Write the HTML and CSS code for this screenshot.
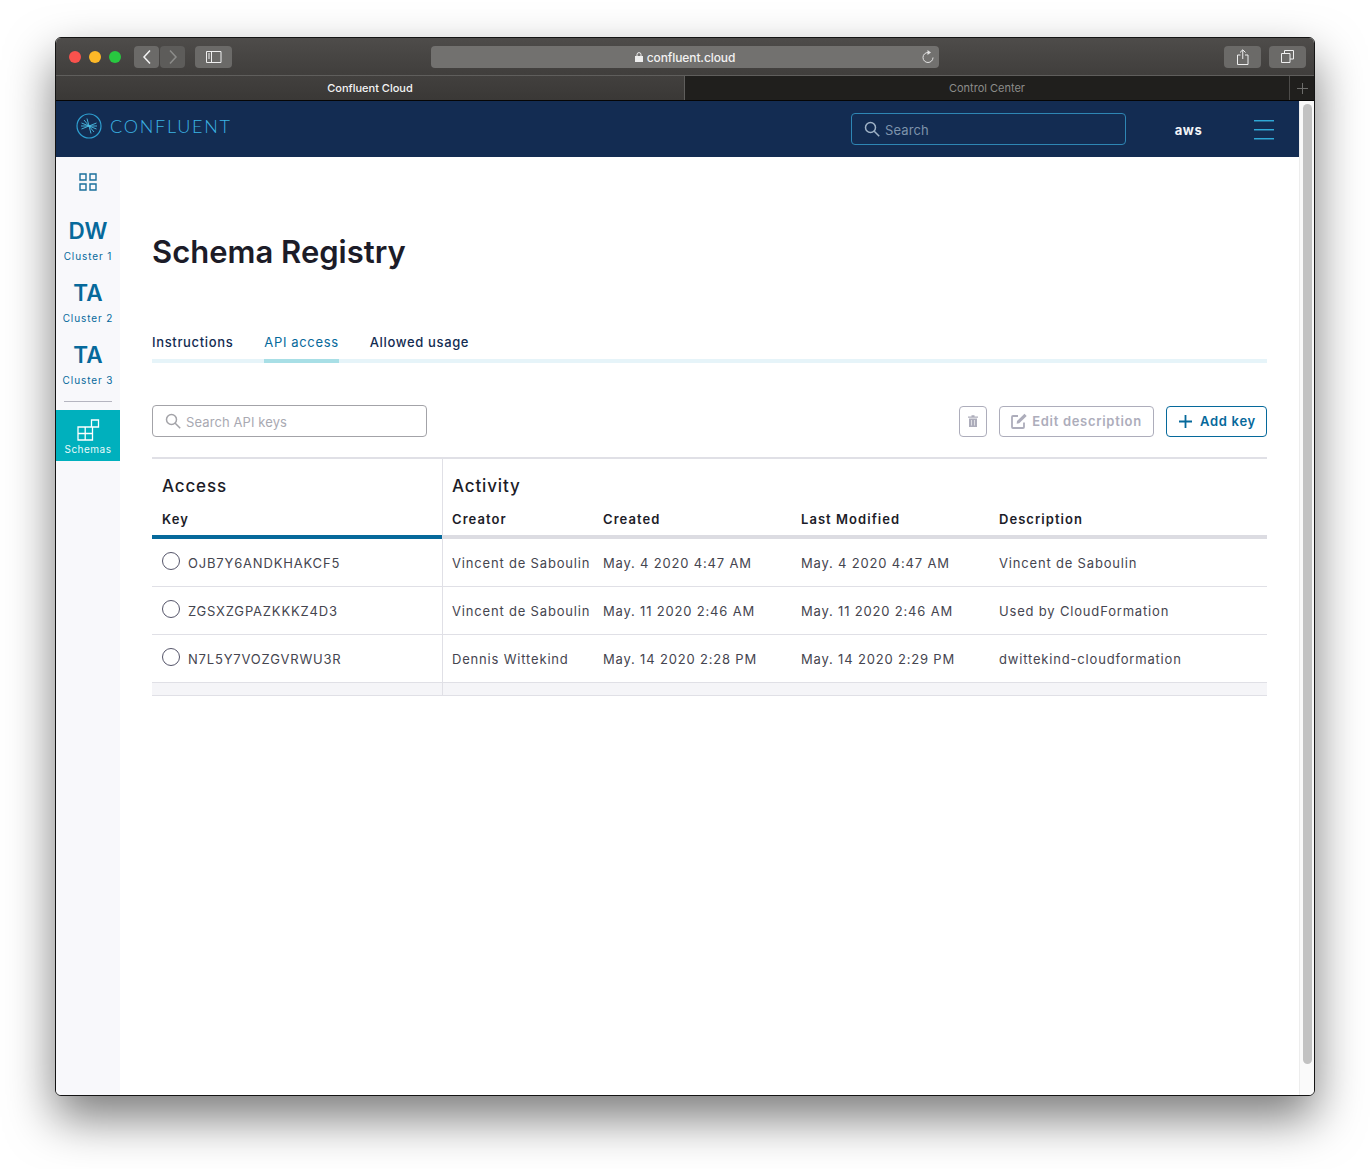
FILE: index.html
```html
<!DOCTYPE html>
<html lang="en">
<head>
    <meta charset="UTF-8">
    <title>Schema Registry</title>
    <link rel="stylesheet" href="styles.css">
</head>
<body>
    <div class="window">
        <div class="toolbar">
            <div class="lights">
                <span class="light red"></span>
                <span class="light yellow"></span>
                <span class="light green"></span>
            </div>
            <div class="nav-buttons">
                <div class="tool-btn nav-btn">
                    <svg width="10" height="16" viewBox="0 0 10 16"><path d="M8 1.5 2 8l6 6.5" fill="none" stroke="#f2f2f2" stroke-width="1.5"/></svg>
                </div>
                <div class="tool-btn nav-btn">
                    <svg width="10" height="16" viewBox="0 0 10 16"><path d="M2 1.5 8 8l-6 6.5" fill="none" stroke="#8c8c8a" stroke-width="1.5"/></svg>
                </div>
            </div>
            <div class="tool-btn wide-btn">
                <svg width="16" height="12" viewBox="0 0 16 12"><path d="M.5.5h14.500v11H.5zM5.500.5v11" fill="none" stroke="#efefef"/><path d="M2 3h2M2 5h2M2 7h2" stroke="#efefef"/></svg>
            </div>
            <div class="address">
                <svg class="lock" width="8" height="10" viewBox="0 0 8 10"><path d="M0 4h8v6H0z" fill="#eee"/><path d="M2 4V2.600a2 2 0 0 1 4 0V4" fill="none" stroke="#eee"/></svg>
                <span>confluent.cloud</span>
                <svg class="reload" width="12" height="13" viewBox="0 0 12 13"><path d="M6 2.500a5 5 0 1 0 5 5" fill="none" stroke="#e2e2e2"/><path d="M5.500 0 9 2.500 5.500 5z" fill="#e2e2e2"/></svg>
            </div>
            <div class="tool-btn wide-btn">
                <svg width="12" height="16" viewBox="0 0 12 16"><path d="M3.500 6H.5v9.500h10.500V6h-3M5.750 10V1M3 3.500 5.750.8l2.750 2.700" fill="none" stroke="#efefef"/></svg>
            </div>
            <div class="tool-btn wide-btn last-btn">
                <svg width="13" height="13" viewBox="0 0 13 13"><path d="M.5 3.500h8.500V12.500H.5zM3.500 3.500V.5h9v8.500H9" fill="none" stroke="#efefef"/></svg>
            </div>
        </div>
        <div class="tabs">
            <div class="tab tab-active">Confluent Cloud</div>
            <div class="tab">Control Center</div>
            <div class="tab-add">
                <svg width="11" height="11" viewBox="0 0 11 11"><path d="M5.500 0v11M0 5.500h11" stroke="#6d6d6b"/></svg>
            </div>
        </div>
        <div class="browser-body">
            <div class="page">
                <header class="topbar">
                    <div class="logo">
                        <svg width="26" height="26" viewBox="0 0 26 26">
                            <circle cx="13" cy="13" r="12" fill="none" stroke="#2e9fd0" stroke-width="1.200"/>
                            <path d="M13 13 5.500 10M13 13 5 13M13 13l-7.500 3M13 13 8 7M13 13 20.500 10M13 13h8M13 13l7.500 3M13 13l5 6M13 13l2 7.500M13 13l-2-7.500" stroke="#4cbfe6" stroke-width=".9"/>
                        </svg>
                        <span>CONFLUENT</span>
                    </div>
                    <div class="top-search">
                        <svg width="16" height="16" viewBox="0 0 16 16"><circle cx="6.500" cy="6.500" r="5" fill="none" stroke="#9fb2c6" stroke-width="1.500"/><path d="m10.200 10.200 5 5" stroke="#9fb2c6" stroke-width="1.500"/></svg>
                        <span>Search</span>
                    </div>
                    <div class="account">aws</div>
                    <div class="burger"><span></span><span></span><span></span></div>
                </header>
                <div class="content-row">
                    <nav class="sidebar">
                        <svg class="grid-icon" width="18" height="18" viewBox="0 0 18 18">
                            <path d="M1 1h6v6H1zM11 1h6v6h-6zM1 11h6v6H1zM11 11h6v6h-6z" fill="none" stroke="#1a6f9c" stroke-width="1.400"/>
                        </svg>
                        <a class="cluster first-cluster"><b>DW</b><small>Cluster 1</small></a>
                        <a class="cluster"><b>TA</b><small>Cluster 2</small></a>
                        <a class="cluster"><b>TA</b><small>Cluster 3</small></a>
                        <div class="side-rule"></div>
                        <a class="side-active">
                            <svg width="23" height="22" viewBox="0 0 23 22">
                                <path d="M1 8h14.500v13H1zM8.200 8v13M1 14.500h14.500M14.500 1h7v7h-7z" fill="none" stroke="#fff" stroke-width="1.300"/>
                            </svg>
                            <small>Schemas</small>
                        </a>
                    </nav>
                    <main class="main">
                        <h1>Schema Registry</h1>
                        <div class="page-tabs">
                            <a>Instructions</a>
                            <a class="selected">API access</a>
                            <a>Allowed usage</a>
                        </div>
                        <div class="actions">
                            <div class="key-search">
                                <svg width="16" height="16" viewBox="0 0 16 16"><circle cx="6.500" cy="6.500" r="5" fill="none" stroke="#a3a3a8" stroke-width="1.500"/><path d="m10.200 10.200 5 5" stroke="#a3a3a8" stroke-width="1.500"/></svg>
                                <span>Search API keys</span>
                            </div>
                            <div class="action-btns">
                                <button class="btn btn-icon" disabled>
                                    <svg width="10" height="12" viewBox="0 0 10 12"><path d="M0 1.500h10v1.200H0zM3.500.3h3v1.200h-3zM1 3.500h8V12H1z" fill="#adadbb"/><path d="M3.500 5v5.500M6.500 5v5.500" stroke="#fff" stroke-width=".6"/></svg>
                                </button>
                                <button class="btn btn-edit" disabled>
                                    <svg width="17" height="16" viewBox="0 0 17 16"><path d="M13 9.500V14a1 1 0 0 1-1 1H2a1 1 0 0 1-1-1V4a1 1 0 0 1 1-1h5" fill="none" stroke="#adadbb" stroke-width="1.800"/><path d="M6 8 13.500 .8l2.200 2.200L8.200 10.300 5.700 10.700z" fill="#adadbb"/></svg>
                                    Edit description
                                </button>
                                <button class="btn btn-add">
                                    <svg width="13" height="13" viewBox="0 0 13 13"><path d="M6.500 0v13M0 6.500h13" stroke="#06699b" stroke-width="1.800"/></svg>
                                    Add key
                                </button>
                            </div>
                        </div>
                        <div class="keys-table">
                            <div class="col-access">
                                <h2>Access</h2>
                                <div class="col-head key-head">Key</div>
                                <div class="key-row"><span class="radio"></span>OJB7Y6ANDKHAKCF5</div>
                                <div class="key-row"><span class="radio"></span>ZGSXZGPAZKKKZ4D3</div>
                                <div class="key-row"><span class="radio"></span>N7L5Y7VOZGVRWU3R</div>
                                <div class="table-foot"></div>
                            </div>
                            <div class="col-activity">
                                <h2>Activity</h2>
                                <div class="activity-row activity-head">
                                    <span>Creator</span><span>Created</span><span>Last Modified</span><span>Description</span>
                                </div>
                                <div class="activity-row">
                                    <span>Vincent de Saboulin</span><span>May. 4 2020 4:47 AM</span><span>May. 4 2020 4:47 AM</span><span>Vincent de Saboulin</span>
                                </div>
                                <div class="activity-row">
                                    <span>Vincent de Saboulin</span><span>May. 11 2020 2:46 AM</span><span>May. 11 2020 2:46 AM</span><span>Used by CloudFormation</span>
                                </div>
                                <div class="activity-row">
                                    <span>Dennis Wittekind</span><span>May. 14 2020 2:28 PM</span><span>May. 14 2020 2:29 PM</span><span>dwittekind-cloudformation</span>
                                </div>
                                <div class="table-foot"></div>
                            </div>
                        </div>
                    </main>
                </div>
            </div>
            <div class="scrollbar"><div class="thumb"></div></div>
        </div>
    </div>
</body>
</html>
```

FILE: styles.css
```css
* {
    box-sizing: border-box;
}
html, body {
    height: 100%;
}
body {
    margin: 0;
    background-color: #fff;
    font-family: Inter, "Liberation Sans", sans-serif;
    color: #1f1f2b;
    overflow: hidden;
}
.window {
    width: 1260px;
    height: 1059px;
    margin: 37px 0 0 55px;
    border: 1px solid #141414;
    border-radius: 6px;
    overflow: hidden;
    box-shadow: 0 22px 48px rgba(0, 0, 0, 0.52);
    background-color: #fff;
    display: flex;
    flex-direction: column;
}
.toolbar {
    height: 38px;
    flex: none;
    display: flex;
    align-items: center;
    padding: 0 8px 0 13px;
    background: linear-gradient(#4e4c4a, #403e3c);
    border-bottom: 1px solid #5f5e5c;
}
.lights {
    display: flex;
    gap: 8px;
    margin-right: 13px;
}
.light {
    width: 12px;
    height: 12px;
    border-radius: 50%;
}
.red { background-color: #f9524d; }
.yellow { background-color: #fdb827; }
.green { background-color: #28c840; }
.nav-buttons {
    display: flex;
    gap: 1px;
    margin-right: 10px;
}
.tool-btn {
    flex: none;
    height: 22px;
    border-radius: 4px;
    background-color: #6b6a68;
    display: flex;
    align-items: center;
    justify-content: center;
}
.nav-btn {
    width: 25px;
}
.nav-btn + .nav-btn {
    background-color: #5d5c5a;
}
.wide-btn {
    width: 37px;
}
.address {
    flex: none;
    width: 508px;
    height: 22px;
    margin: 0 285px 0 199px;
    border-radius: 4px;
    background-color: #72716f;
    color: #f2f2f2;
    font-size: 12px;
    font-weight: 500;
    letter-spacing: -0.1px;
    display: flex;
    align-items: center;
    justify-content: center;
    gap: 4px;
    padding-top: 1px;
    position: relative;
}
.reload {
    position: absolute;
    right: 5px;
    top: 4px;
}
.last-btn {
    margin-left: 8px;
}
.tabs {
    height: 25px;
    flex: none;
    display: flex;
    border-bottom: 1px solid #050505;
    background-color: #201f1d;
    font-size: 11px;
    line-height: 24px;
    color: #8c8c8a;
    text-align: center;
}
.tab {
    width: 604px;
}
.tab-active {
    width: 629px;
    background: linear-gradient(#42403e, #3a3836);
    border-right: 1px solid #5f5e5c;
    color: #f4f4f4;
    font-weight: 500;
}
.tab-add {
    width: 25px;
    border-left: 1px solid #4d4c4a;
    display: flex;
    align-items: center;
    justify-content: center;
}
.browser-body {
    flex: 1;
    min-height: 0;
    display: flex;
}
.page {
    flex: 1;
    display: flex;
    flex-direction: column;
}
.topbar {
    height: 56px;
    flex: none;
    background-color: #132c52;
    display: flex;
    align-items: center;
    padding: 0 25px 0 20px;
}
.logo {
    display: flex;
    align-items: center;
    gap: 8px;
    color: #3cb4e4;
    font-family: Lato, "Liberation Sans", sans-serif;
    font-size: 18px;
    font-weight: 300;
    letter-spacing: 1.75px;
    margin-top: -7px;
}
.top-search {
    width: 275px;
    height: 32px;
    margin-left: auto;
    border: 1px solid #2e86b4;
    border-radius: 4px;
    display: flex;
    align-items: center;
    gap: 5px;
    padding-left: 12px;
    color: #7d93ab;
    font-size: 13px;
    letter-spacing: 0.1px;
}
.top-search span,
.key-search span {
    margin-top: 2px;
}
.account {
    width: 125px;
    margin-top: 2px;
    text-align: center;
    color: #f3f5f8;
    font-size: 13px;
    font-weight: 700;
    letter-spacing: 0.6px;
}
.burger {
    width: 20px;
    margin-left: 3px;
    display: flex;
    flex-direction: column;
    gap: 8px;
}
.burger span {
    height: 1px;
    background-color: #2ea8d6;
    box-shadow: 0 1px 0 #23668f;
}
.content-row {
    flex: 1;
    display: flex;
    min-height: 0;
}
.sidebar {
    width: 64px;
    flex: none;
    background-color: #f8f8fb;
    display: flex;
    flex-direction: column;
    align-items: center;
    padding-top: 16px;
}
.cluster {
    display: flex;
    flex-direction: column;
    align-items: center;
    margin-top: 16px;
    color: #06699b;
}
.first-cluster {
    margin-top: 26px;
}
.cluster b {
    font-size: 22.5px;
    line-height: 28px;
    font-weight: 600;
}
.cluster small,
.side-active small {
    font-size: 10px;
    line-height: 13px;
    letter-spacing: 0.9px;
    margin-top: 5px;
}
.side-rule {
    width: 48px;
    height: 1px;
    margin-top: 14px;
    background-color: #b5b5c0;
}
.side-active {
    width: 64px;
    height: 51px;
    margin-top: 8px;
    padding-top: 9px;
    background-color: #00b0bd;
    color: #e8fafb;
    display: flex;
    flex-direction: column;
    align-items: center;
}
.side-active small {
    margin-top: 2px;
    letter-spacing: 0.5px;
}
.main {
    flex: 1;
    padding: 0 32px;
}
h1 {
    margin: 76px 0 0;
    font-size: 31px;
    line-height: 38px;
    font-weight: 600;
    color: #1c1c28;
}
.page-tabs {
    display: flex;
    gap: 31px;
    margin-top: 62px;
    height: 30px;
    border-bottom: 4px solid #e6f4f9;
    font-size: 13px;
    font-weight: 500;
    line-height: 18px;
    letter-spacing: 0.65px;
    color: #132c52;
}
.page-tabs a {
    height: 30px;
}
.page-tabs .selected {
    font-weight: 400;
    color: #06699b;
    border-bottom: 4px solid #a8dfe6;
}
.actions {
    display: flex;
    align-items: center;
    justify-content: space-between;
    margin-top: 42px;
}
.key-search {
    width: 275px;
    height: 32px;
    border: 1px solid #a3a3a8;
    border-radius: 4px;
    display: flex;
    align-items: center;
    gap: 5px;
    padding-left: 12px;
    color: #a9a9b2;
    font-size: 13px;
    letter-spacing: 0.1px;
}
.action-btns {
    display: flex;
    gap: 12px;
}
.btn {
    height: 31px;
    border-radius: 4px;
    background-color: #fff;
    font-family: Inter, "Liberation Sans", sans-serif;
    font-size: 13px;
    font-weight: 600;
    letter-spacing: 0.7px;
    display: flex;
    align-items: center;
    justify-content: center;
    gap: 4px;
    padding: 0;
}
.btn[disabled] {
    border: 1px solid #adadbb;
    color: #adadbb;
}
.btn-icon {
    width: 28px;
}
.btn-edit {
    width: 155px;
}
.btn-add {
    width: 101px;
    padding-left: 2px;
    border: 1px solid #06699b;
    color: #06699b;
    gap: 8px;
}
.keys-table {
    display: flex;
    margin-top: 20px;
    border-top: 2px solid #e0e0e6;
    font-size: 13px;
    letter-spacing: 0.82px;
    color: #45454f;
}
.col-access {
    width: 291px;
    border-right: 1px solid #e0e0e6;
}
.col-activity {
    flex: 1;
}
h2 {
    margin: 0;
    height: 46px;
    padding: 15px 0 0 10px;
    font-size: 17px;
    line-height: 24px;
    font-weight: 500;
    letter-spacing: 0.85px;
    color: #1c1c28;
}
.col-activity h2 {
    padding-left: 9px;
}
.col-head,
.activity-head {
    font-weight: 600;
    letter-spacing: 1.05px;
    color: #1c1c28;
    line-height: 28px;
}
.key-head {
    height: 34px;
    padding-left: 10px;
    border-bottom: 4px solid #06699b;
}
.key-row {
    height: 48px;
    padding-left: 10px;
    display: flex;
    align-items: center;
    gap: 8px;
    border-bottom: 1px solid #e0e0e6;
}
.radio {
    width: 18px;
    height: 18px;
    margin-top: -4px;
    border: 1px solid #55556a;
    border-radius: 50%;
}
.activity-row {
    display: grid;
    grid-template-columns: 151px 198px 198px 1fr;
    height: 48px;
    padding-left: 9px;
    align-items: center;
    border-bottom: 1px solid #e0e0e6;
    white-space: nowrap;
}
.activity-row.activity-head {
    height: 34px;
    align-items: start;
    border-bottom: 4px solid #dcdce2;
}
.table-foot {
    height: 13px;
    background-color: #f5f5f8;
    border-bottom: 1px solid #e0e0e6;
}
.scrollbar {
    width: 15px;
    flex: none;
    padding: 3px 2px 0 3px;
    background-color: #fafafa;
    border-left: 1px solid #ededed;
}
.thumb {
    width: 9px;
    height: 960px;
    border-radius: 5px;
    background-color: #c2c2c2;
}
```
